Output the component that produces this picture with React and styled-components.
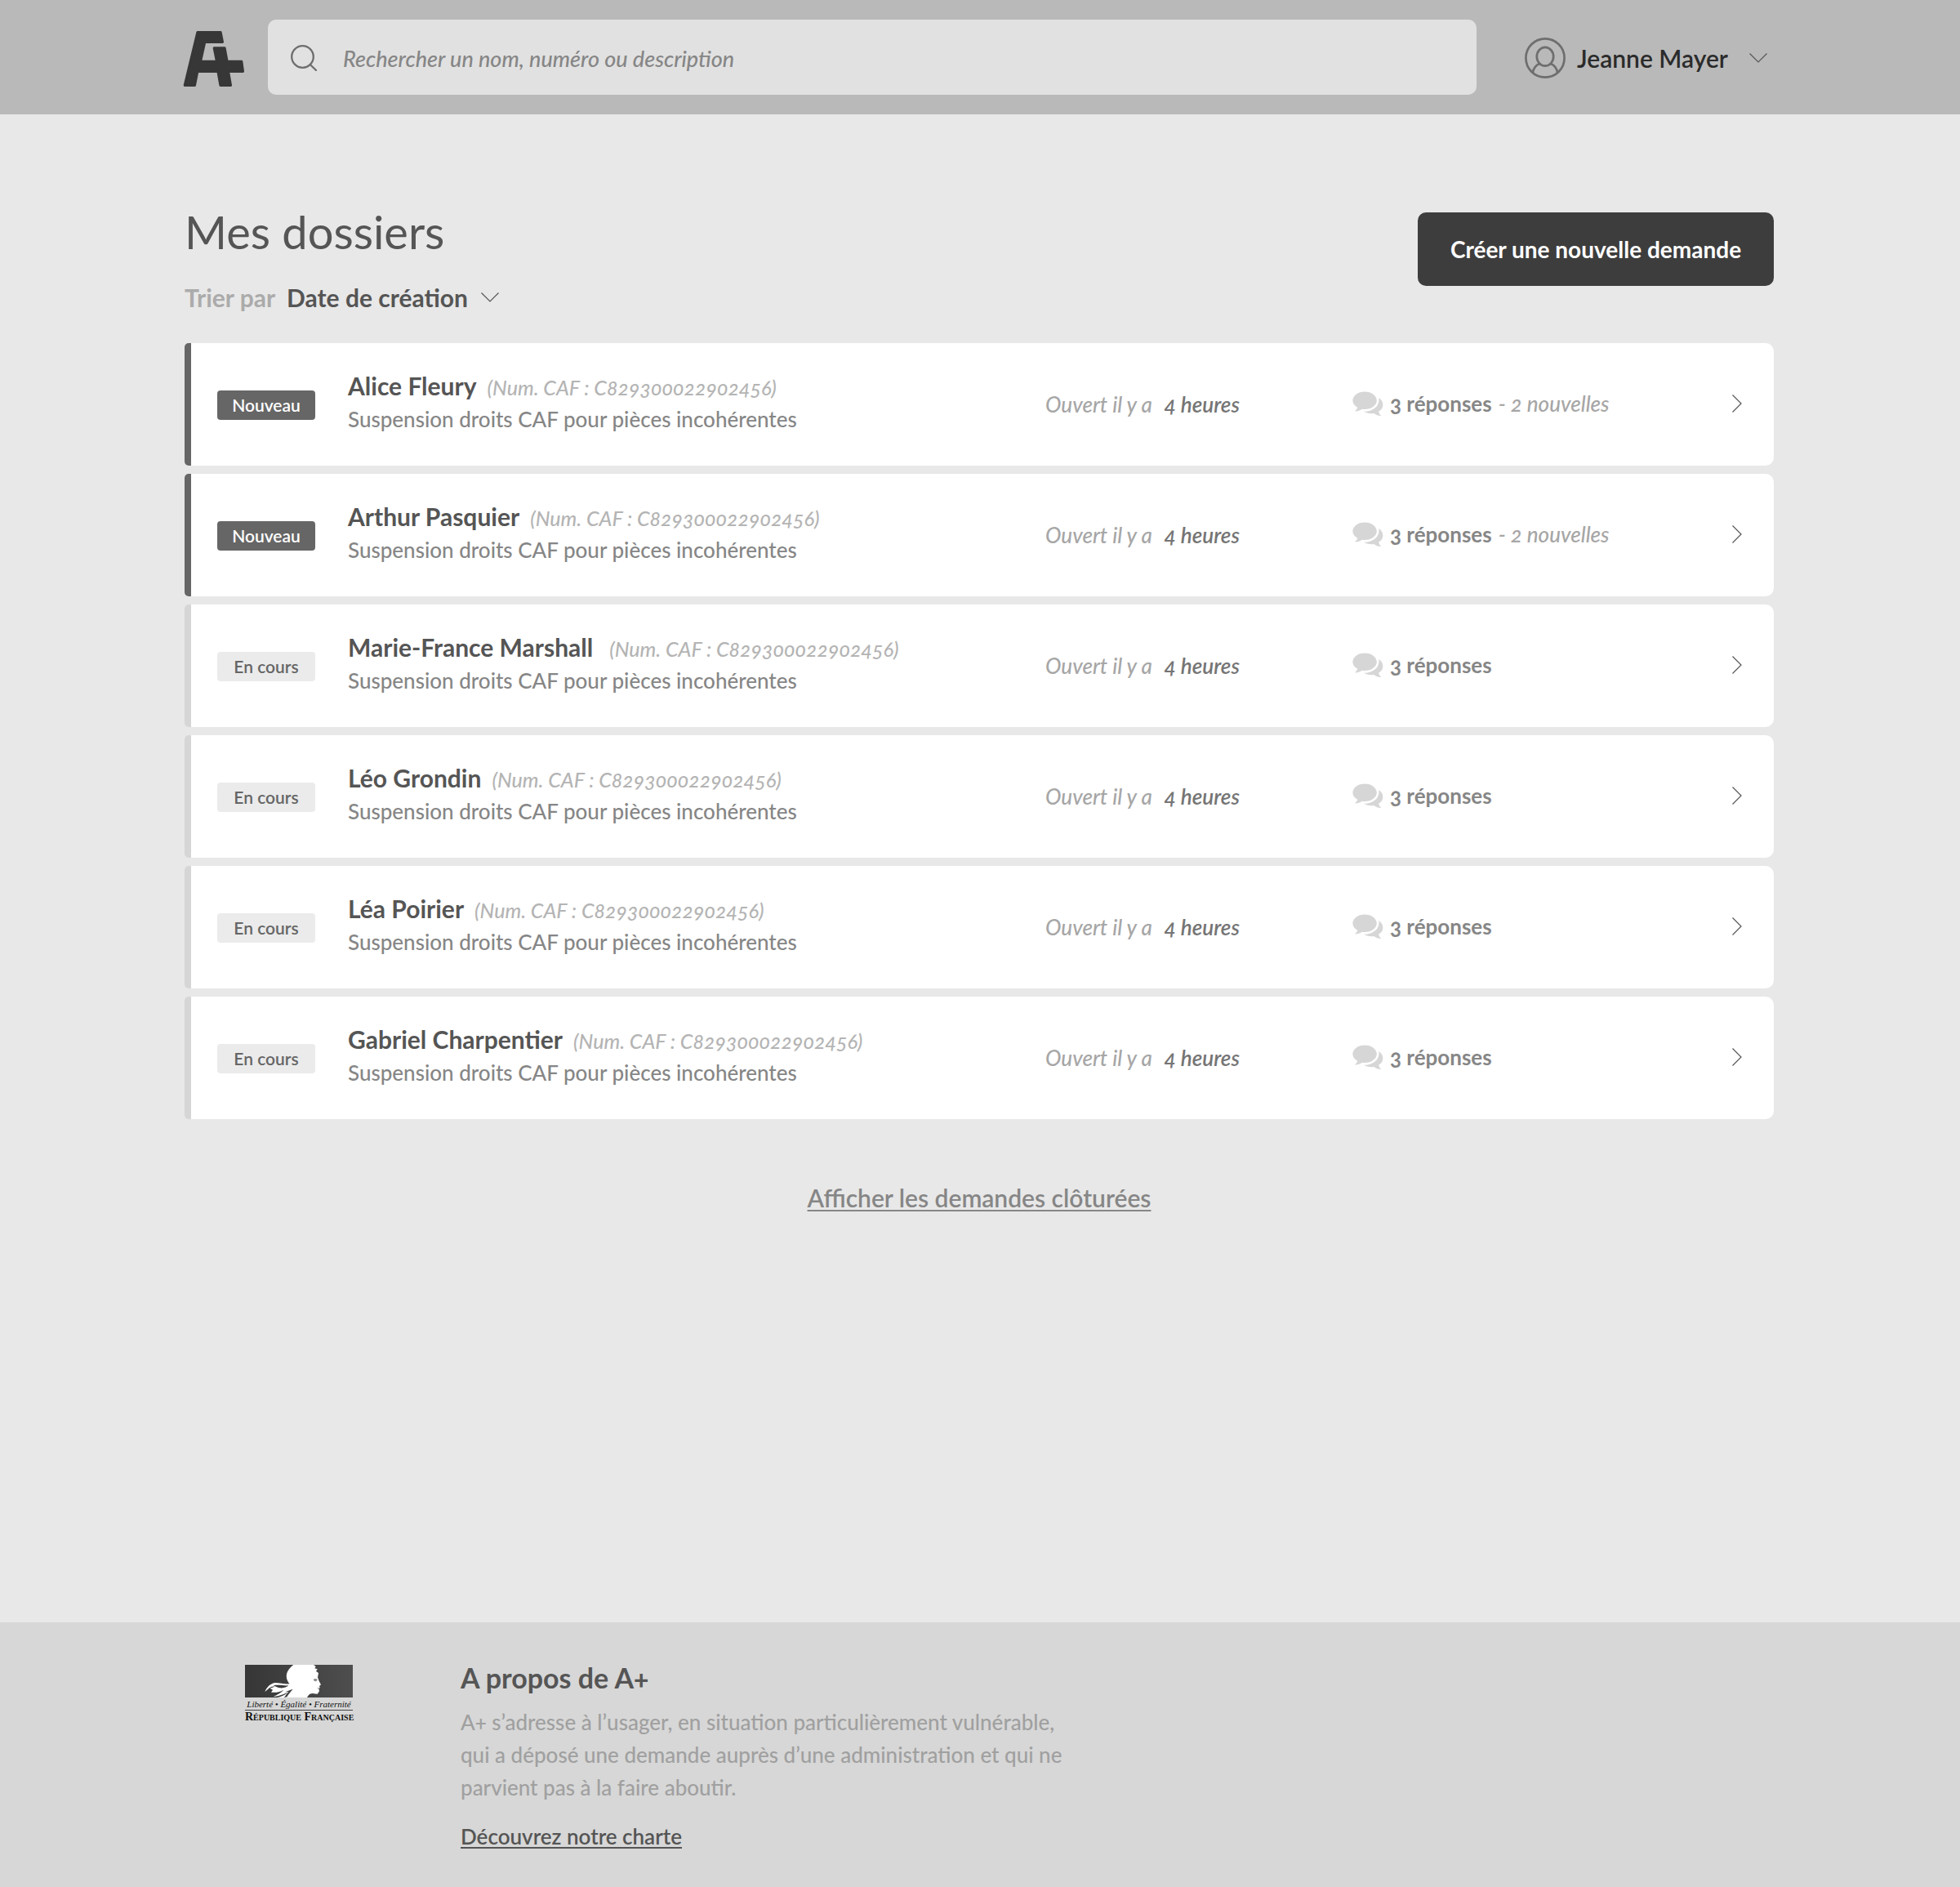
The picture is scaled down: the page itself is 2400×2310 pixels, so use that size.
import React from "react";
import styled, { createGlobalStyle, css } from "styled-components";

const GlobalStyle = createGlobalStyle`
  *, *::before, *::after { box-sizing: border-box; }
  body {
    margin: 0;
    background: #e8e8e8;
    font-family: Lato, "Open Sans", sans-serif;
    font-size: 26px;
    font-weight: 500;
    font-variant-numeric: oldstyle-nums;
    color: #555;
  }
  h1, h2, p, ul { margin: 0; padding: 0; }
  button, input, select { font: inherit; color: inherit; border: 0; background: none; padding: 0; }
  button { cursor: pointer; }
  svg { display: block; flex: none; }
`;

const Page = styled.div`
  min-height: 100vh;
  display: flex;
  flex-direction: column;
`;

const gutters = css`
  padding-left: 226px;
  padding-right: 228px;
`;

const Header = styled.header`
  ${gutters}
  display: flex;
  align-items: center;
  height: 140px;
  background: #b9b9b9;
`;

const HomeLink = styled.a`
  margin: 4px 28px 0 -2px;
`;

const SearchBox = styled.label`
  flex: 1;
  display: flex;
  align-items: center;
  gap: 32px;
  height: 92px;
  padding: 2px 28px 0;
  border-radius: 10px;
  background: #e1e1e1;
`;

const SearchInput = styled.input`
  flex: 1;
  min-width: 0;
  height: 100%;
  outline: none;
  font-size: 27px;
  font-style: italic;
  &::placeholder { color: #868686; opacity: 1; }
`;

const UserButton = styled.button`
  display: flex;
  align-items: center;
  gap: 14px;
  width: 305px;
  margin-left: 59px;
  padding: 2px 8px 0 0;
  font-size: 30px;
  font-weight: 600;
  line-height: 40px;
  color: #2b2b2b;
`;

const UserName = styled.span`
  flex: 1;
  text-align: left;
  white-space: nowrap;
`;

const Main = styled.main`
  ${gutters}
  flex: 1;
  padding-top: 120px;
  padding-bottom: 120px;
`;

const TitleBar = styled.div`
  display: flex;
  justify-content: space-between;
  align-items: flex-start;
  height: 160px;
`;

const Title = styled.h1`
  font-size: 56px;
  line-height: 48px;
  font-weight: 400;
`;

const Sort = styled.div`
  display: flex;
  align-items: center;
  margin-top: 36px;
  font-size: 30px;
  line-height: 40px;
  font-weight: 700;
`;

const SortLabel = styled.label`
  margin-right: 14px;
  color: #ababab;
`;

const SortSelect = styled.select`
  appearance: none;
  margin-right: 16px;
`;

const CreateButton = styled.button`
  min-width: 436px;
  height: 90px;
  padding: 0 36px;
  border-radius: 10px;
  background: #3d3d3d;
  color: #fff;
  font-size: 28px;
  font-weight: 700;
`;

const CaseList = styled.ul`
  display: flex;
  flex-direction: column;
  gap: 10px;
  list-style: none;
`;

const CaseCard = styled.a`
  display: grid;
  grid-template-columns: 120px minmax(0, 1fr) 376px 464px 14px;
  align-items: center;
  height: 150px;
  padding: 0 38px 0 32px;
  border-left: 8px solid ${(p) => (p.$fresh ? "#666" : "#d6d6d6")};
  border-radius: 5px 10px 10px 5px;
  background: #fff;
  color: inherit;
  text-decoration: none;
`;

const Badge = styled.span`
  height: 36px;
  margin-top: 2px;
  border-radius: 4px;
  background: ${(p) => (p.$fresh ? "#666" : "#ebebeb")};
  color: ${(p) => (p.$fresh ? "#fff" : "#666")};
  font-size: 21px;
  line-height: 36px;
  font-weight: 600;
  text-align: center;
`;

const Summary = styled.div`
  padding: 0 0 4px 40px;
  line-height: 39px;
  white-space: nowrap;
`;

const Name = styled.span`
  margin-right: ${(p) => (p.$wide ? 20 : 13)}px;
  font-size: 30px;
  font-weight: 700;
`;

const CafNumber = styled.span`
  font-size: 25px;
  font-style: italic;
  color: #b4b4b4;
`;

const Subject = styled.p`
  color: #868686;
`;

const Opened = styled.div`
  font-style: italic;
  color: #a6a6a6;
`;

const Delay = styled.span`
  margin-left: 15px;
  font-weight: 600;
  color: #757575;
`;

const Replies = styled.div`
  display: flex;
  align-items: center;
  gap: 8px;
  padding-bottom: 2px;
  color: #868686;
  font-weight: 700;
`;

const NewReplies = styled.span`
  font-style: italic;
  font-weight: 500;
  color: #a6a6a6;
`;

const ClosedLink = styled.a`
  display: block;
  width: fit-content;
  margin: 76px auto 0;
  font-size: 30px;
  line-height: 40px;
  font-weight: 600;
  color: #868686;
  text-underline-offset: 3px;
  text-decoration-thickness: 2px;
`;

const Footer = styled.footer`
  display: flex;
  align-items: flex-start;
  gap: 132px;
  padding: 48px 300px 42px;
  background: #d7d7d7;
`;

const Republic = styled.div`
  flex: none;
  width: 132px;
  padding-top: 4px;
  font-family: "Liberation Serif", serif;
  color: #111;
  white-space: nowrap;
`;

const Motto = styled.p`
  padding: 3px 0 2px;
  border-bottom: 1px solid #444;
  font-size: 11px;
  line-height: 10px;
  font-style: italic;
  text-align: center;
`;

const RepublicName = styled.p`
  font-size: 14px;
  line-height: 16px;
  font-weight: 700;
  font-variant-caps: small-caps;
  text-align: center;
`;

const About = styled.section`
  max-width: 750px;
`;

const AboutTitle = styled.h2`
  margin-bottom: 14px;
  font-size: 34px;
  line-height: 40px;
  font-weight: 700;
`;

const AboutText = styled.p`
  margin-bottom: 20px;
  line-height: 40px;
  color: #a0a0a0;
`;

const CharterLink = styled.a`
  line-height: 40px;
  font-weight: 600;
  color: inherit;
  text-underline-offset: 3px;
  text-decoration-thickness: 2px;
`;

const Logo = () => (
  <svg width="76" height="68" viewBox="26 24 228 204" aria-hidden="true">
    <path
      d="M80 29H164L171 64H106L90 136H151L141 87H179L188 136H241L246 172H192L201 223H164L155 172H79L69 223H33Z"
      fill="#373737"
      stroke="#373737"
      strokeWidth="10"
      strokeLinejoin="round"
    />
  </svg>
);

const SearchIcon = () => (
  <svg width="32" height="32" viewBox="0 0 32 32" fill="none" stroke="#6e6e6e" strokeWidth="2.300" strokeLinecap="round" aria-hidden="true">
    <circle cx="14.5" cy="14.5" r="13.3" />
    <path d="M24 24.200L31 31" />
  </svg>
);

const UserIcon = () => (
  <svg width="50" height="50" viewBox="0 0 50 50" fill="none" stroke="#6e6e6e" strokeWidth="2.700" aria-hidden="true">
    <circle cx="25" cy="25" r="23.600" />
    <ellipse cx="25" cy="23.300" rx="10.200" ry="11.400" />
    <path d="M18 32C13.500 34 10.800 37.500 10 42.600M32 32C36.500 34 39.200 37.500 40 42.600" />
  </svg>
);

const RepliesIcon = () => (
  <svg width="38" height="31" viewBox="47 43 116 94" fill="#d6d6d6" aria-hidden="true">
    <path d="M93 44C118 44 138 59 138 77C138 95 118 110 93 110C89 110 86 110 83 109C74 115 65 118 56 117C61 113 65 108 66 103C55 97 48 88 48 77C48 59 68 44 93 44Z" />
    <path d="M146 67C157 74 162 84 161 96C160 106 154 113 145 118C147 125 150 130 155 134C145 135 135 131 128 125C112 127 99 124 90 118C124 119 150 98 146 67Z" />
  </svg>
);

const ChevronDown = () => (
  <svg width="22" height="12" viewBox="0 0 22 12" fill="none" stroke="#555" strokeWidth="1.200" aria-hidden="true">
    <path d="M0.500 0.500L11 11L21.500 0.500" />
  </svg>
);

const ChevronRight = () => (
  <svg width="14" height="24" viewBox="-1 0 14 24" fill="none" stroke="#555" strokeWidth="1.200" aria-hidden="true">
    <path d="M0.500 0.500L11 11L0.500 21.500" />
  </svg>
);

const Marianne = () => (
  <svg width="132" height="40" viewBox="0 0 396 120" aria-hidden="true">
    <defs>
      <linearGradient id="flag">
        <stop offset="0" stopColor="#363636" />
        <stop offset="1" stopColor="#4e4e4e" />
      </linearGradient>
    </defs>
    <rect width="396" height="120" fill="url(#flag)" />
    <path
      d="M178 0H252L260 6L256 13L266 16L261 24L270 30L267 46L272 60L279 73L273 78L275 84L271 88L273 97L266 107L247 105C237 106 232 112 228 120H118C140 116 148 108 158 101C146 104 138 112 104 117C122 108 134 101 142 92C132 98 116 103 96 101L102 92L92 86L110 80C98 78 92 82 84 90L73 99C80 82 92 70 110 66C130 66 146 72 164 70C152 58 148 38 158 22C164 12 170 6 178 0Z"
      fill="#fff"
    />
    <path d="M104 76C126 72 144 78 160 76C152 84 138 87 124 84C118 83 110 78 104 76ZM148 100C158 96 166 92 176 90C168 98 160 108 154 118L144 120C150 112 154 106 160 99Z" fill="#3c3c3c" />
    <path d="M251 54C256 50 262 51 266 54L262 61L255 60Z" fill="#8b8b8b" />
    <path d="M271 84L264 86L272 88Z" fill="#777" />
  </svg>
);

const cases = [
  { name: "Alice Fleury", fresh: true },
  { name: "Arthur Pasquier", fresh: true },
  { name: "Marie-France Marshall", wide: true },
  { name: "Léo Grondin" },
  { name: "Léa Poirier" },
  { name: "Gabriel Charpentier" },
];

function CaseRow({ name, fresh, wide }) {
  return (
    <li>
      <CaseCard href="#" $fresh={fresh}>
        <Badge $fresh={fresh}>{fresh ? "Nouveau" : "En cours"}</Badge>
        <Summary>
          <Name $wide={wide}>{name}</Name>
          <CafNumber>(Num. CAF : C829300022902456)</CafNumber>
          <Subject>Suspension droits CAF pour pièces incohérentes</Subject>
        </Summary>
        <Opened>
          Ouvert il y a<Delay>4 heures</Delay>
        </Opened>
        <Replies>
          <RepliesIcon />
          <span>3 réponses</span>
          {fresh && <NewReplies>- 2 nouvelles</NewReplies>}
        </Replies>
        <ChevronRight />
      </CaseCard>
    </li>
  );
}

export default function App() {
  return (
    <Page>
      <GlobalStyle />
      <Header>
        <HomeLink href="#" aria-label="A+">
          <Logo />
        </HomeLink>
        <SearchBox>
          <SearchIcon />
          <SearchInput
            type="search"
            aria-label="Rechercher"
            placeholder="Rechercher un nom, numéro ou description"
          />
        </SearchBox>
        <UserButton type="button">
          <UserIcon />
          <UserName>Jeanne Mayer</UserName>
          <ChevronDown />
        </UserButton>
      </Header>
      <Main>
        <TitleBar>
          <div>
            <Title>Mes dossiers</Title>
            <Sort>
              <SortLabel htmlFor="sort">Trier par</SortLabel>
              <SortSelect id="sort" defaultValue="date">
                <option value="date">Date de création</option>
              </SortSelect>
              <ChevronDown />
            </Sort>
          </div>
          <CreateButton type="button">Créer une nouvelle demande</CreateButton>
        </TitleBar>
        <CaseList>
          {cases.map((item) => (
            <CaseRow key={item.name} {...item} />
          ))}
        </CaseList>
        <ClosedLink href="#">Afficher les demandes clôturées</ClosedLink>
      </Main>
      <Footer>
        <Republic>
          <Marianne />
          <Motto>Liberté • Égalité • Fraternité</Motto>
          <RepublicName>République Française</RepublicName>
        </Republic>
        <About>
          <AboutTitle>A propos de A+</AboutTitle>
          <AboutText>
            A+ s’adresse à l’usager, en situation particulièrement vulnérable, qui a déposé une
            demande auprès d’une administration et qui ne parvient pas à la faire aboutir.
          </AboutText>
          <CharterLink href="#">Découvrez notre charte</CharterLink>
        </About>
      </Footer>
    </Page>
  );
}
